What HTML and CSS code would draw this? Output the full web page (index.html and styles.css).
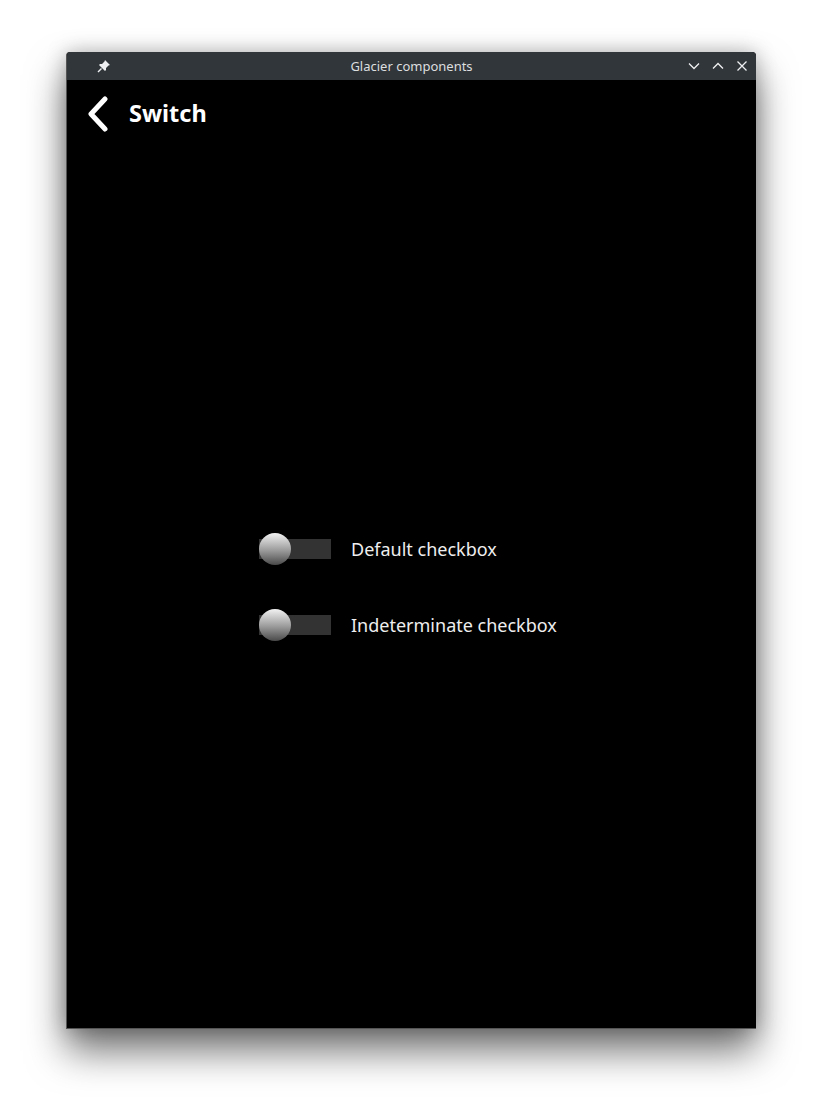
FILE: index.html
```html
<!DOCTYPE html>
<html lang="en">
<head>
  <meta charset="UTF-8">
  <title>Glacier components</title>
  <link rel="stylesheet" href="styles.css">
</head>
<body>
  <div class="window">
    <div class="titlebar">
      <svg class="pin" width="14" height="14" viewBox="0 0 14 14">
        <path d="M8 1 L13 6 L11.5 6.5 L9 9 L9 11 L8 12 L2 6 L3 5 L5 5 L7.5 2.5 Z" fill="#eff0f1"/>
        <path d="M4.5 9.5 L1 13" stroke="#eff0f1" stroke-width="1.5"/>
      </svg>
      <span class="title">Glacier components</span>
      <div class="controls">
        <svg width="14" height="14" viewBox="0 0 14 14"><path d="M2 4.5 L7 9.5 L12 4.5" fill="none" stroke="#eff0f1" stroke-width="1.3"/></svg>
        <svg width="14" height="14" viewBox="0 0 14 14"><path d="M2 9.5 L7 4.5 L12 9.5" fill="none" stroke="#eff0f1" stroke-width="1.3"/></svg>
        <svg width="14" height="14" viewBox="0 0 14 14"><path d="M2.5 2.5 L11.5 11.5 M11.5 2.5 L2.5 11.5" fill="none" stroke="#eff0f1" stroke-width="1.3"/></svg>
      </div>
    </div>
    <div class="content">
      <div class="header">
        <svg class="back" width="24" height="36" viewBox="0 0 24 36">
          <path d="M19 3 L5 18 L19 33" fill="none" stroke="#fff" stroke-width="5" stroke-linecap="round" stroke-linejoin="round"/>
        </svg>
        <h1>Switch</h1>
      </div>
      <div class="list">
        <div class="row">
          <div class="switch"><div class="knob"></div></div>
          <span class="label">Default checkbox</span>
        </div>
        <div class="row">
          <div class="switch"><div class="knob"></div></div>
          <span class="label">Indeterminate checkbox</span>
        </div>
      </div>
    </div>
  </div>
</body>
</html>
```

FILE: styles.css
```css
html, body {
  height: 100%;
}
body {
  margin: 0;
  padding-top: 52px;
  box-sizing: border-box;
  background: #fff;
  font-family: "Noto Sans", "Open Sans", sans-serif;
  overflow: hidden;
}
.window {
  margin-left: 66px;
  width: 690px;
  height: 977px;
  background: #000;
  box-shadow: 0 22px 38px rgba(0, 0, 0, 0.55), 0 0 20px rgba(0, 0, 0, 0.25);
  border-radius: 4px 4px 0 0;
  display: flex;
  flex-direction: column;
  overflow: hidden;
  border-left: 1px solid #555;
  border-bottom: 1px solid #555;
  box-sizing: border-box;
}
.titlebar {
  height: 28px;
  background: #31363b;
  display: flex;
  align-items: center;
  position: relative;
  color: #dcdedf;
  font-size: 13px;
  flex-shrink: 0;
}
.pin {
  margin-left: 30px;
}
.title {
  position: absolute;
  left: 0;
  right: 0;
  text-align: center;
  pointer-events: none;
}
.controls {
  margin-left: auto;
  margin-right: 7px;
  display: flex;
  gap: 10px;
}
.content {
  flex: 1;
}
.header {
  display: flex;
  align-items: center;
  height: 66px;
  padding-left: 19px;
}
.back {
  margin-top: 1px;
}
h1 {
  margin: 0 0 0 19px;
  color: #fff;
  font-size: 23.5px;
  font-weight: bold;
}
.list {
  display: flex;
  flex-direction: column;
  gap: 44px;
  margin-top: 387px;
  padding-left: 192px;
}
.row {
  display: flex;
  align-items: center;
  height: 32px;
}
.switch {
  width: 72px;
  height: 20px;
  background: #333;
  position: relative;
}
.knob {
  position: absolute;
  left: 0;
  top: -6px;
  width: 32px;
  height: 32px;
  border-radius: 50%;
  background: linear-gradient(to bottom, #f2f2f2, #9a9a9a 55%, #4a4a4a);
}
.label {
  margin-left: 20px;
  color: #eee;
  font-size: 18px;
}
```
